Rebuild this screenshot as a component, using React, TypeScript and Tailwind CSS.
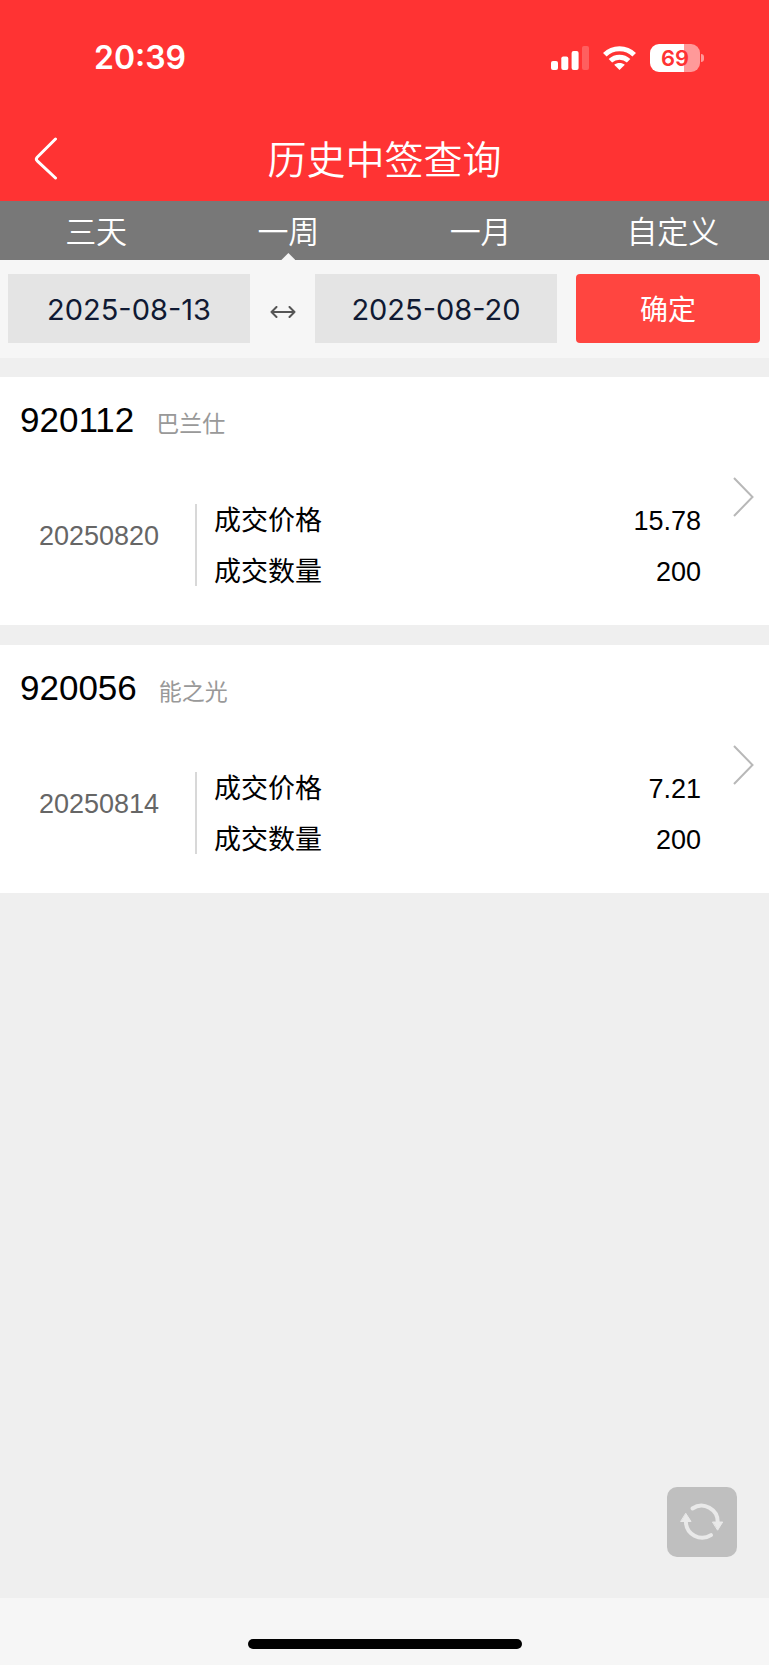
import { useState } from 'react';

interface Allotment {
  code: string;
  name: string;
  date: string;
  price: string;
  quantity: string;
}

const RANGES = ['三天', '一周', '一月', '自定义'];

const ALLOTMENTS: Allotment[] = [
  { code: '920112', name: '巴兰仕', date: '20250820', price: '15.78', quantity: '200' },
  { code: '920056', name: '能之光', date: '20250814', price: '7.21', quantity: '200' },
];

function StatusBar() {
  return (
    <div className="flex h-[116px] items-center justify-between pl-[94px] pr-[65px]">
      <span className="font-['Inter',sans-serif] text-[32px] font-semibold leading-10">20:39</span>
      <div className="flex items-center gap-[14px]">
        <svg width="38" height="24" viewBox="0 0 38 24" fill="currentColor" aria-hidden="true">
          <rect x="0" y="15" width="7" height="9" rx="2" />
          <rect x="10.3" y="10.5" width="7" height="13.5" rx="2" />
          <rect x="20.6" y="5" width="7" height="19" rx="2" />
          <rect x="31" y="0" width="7" height="24" rx="2" opacity="0.22" />
        </svg>
        <svg width="33" height="24" viewBox="0 0 33 24" aria-hidden="true">
          <g fill="none" stroke="currentColor" strokeWidth="5">
            <path d="M1.8 8.8C9.8 0.7 23.2 0.7 31.2 8.8" />
            <path d="M7.4 14.8C12.4 10 20.6 10 25.6 14.8" />
          </g>
          <path d="M16.5 24L11.2 18.8C14.2 16.3 18.8 16.3 21.8 18.8Z" fill="currentColor" />
        </svg>
        <div className="flex items-center gap-px">
          <div className="flex h-7 w-[50px] items-center justify-center rounded-[9px] bg-[linear-gradient(90deg,#fff_68%,#ff9999_68%)]">
            <span className="font-['Inter',sans-serif] text-[22px] font-semibold leading-7 text-[#ff3333]">69</span>
          </div>
          <div className="h-2 w-[3px] rounded-r-full bg-[#ff9999]" />
        </div>
      </div>
    </div>
  );
}

function AllotmentCard({ item }: { item: Allotment }) {
  return (
    <a href={`#${item.code}`} className="flex items-center bg-white pb-2 pl-5 pr-[15px]">
      <div className="flex-1 pb-[31px] pt-[23px]">
        <div className="flex items-baseline gap-[22px]">
          <h2 className="text-[35px] leading-10 text-black">{item.code}</h2>
          <p className="text-[23px] leading-8 text-[#999999]">{item.name}</p>
        </div>
        <div className="mt-16 flex items-center text-[27px] leading-7 text-black">
          <time className="w-[175px] pb-[18px] pl-[19px] text-[#666666]">{item.date}</time>
          <dl className="flex flex-1 flex-col gap-[23px] border-l-2 border-[#d8d8d8] pl-[17px] pr-[32px] pt-[3px]">
            <div className="flex justify-between">
              <dt>成交价格</dt>
              <dd>{item.price}</dd>
            </div>
            <div className="flex justify-between">
              <dt>成交数量</dt>
              <dd>{item.quantity}</dd>
            </div>
          </dl>
        </div>
      </div>
      <svg width="21" height="40" viewBox="0 0 21 40" fill="none" stroke="#b8b8b8" strokeWidth="2" aria-hidden="true">
        <path d="M1 1L19.5 20L1 39" />
      </svg>
    </a>
  );
}

export default function App() {
  const [range, setRange] = useState('一周');
  const [startDate, setStartDate] = useState('2025-08-13');
  const [endDate, setEndDate] = useState('2025-08-20');

  return (
    <div className="flex min-h-screen flex-col bg-[#efefef] font-['Liberation_Sans','Noto_Sans_CJK_SC',sans-serif]">
      <header className="bg-[#ff3333] text-white">
        <StatusBar />
        <div className="grid h-[85px] grid-cols-[1fr_auto_1fr] items-center px-[34px]">
          <button type="button" aria-label="返回" className="w-6">
            <svg width="24" height="44" viewBox="0 0 24 44" fill="none" stroke="currentColor" strokeWidth="3" strokeLinecap="round" strokeLinejoin="round">
              <path d="M21.5 2L3.2 20.2Q1.5 22 3.2 23.8L21.5 41" />
            </svg>
          </button>
          <h1 className="pt-1 text-[39px] font-[350] leading-[48px]">历史中签查询</h1>
        </div>
      </header>

      <nav className="grid grid-cols-4 bg-[#787878] text-white">
        {RANGES.map((label) => (
          <button
            key={label}
            type="button"
            onClick={() => setRange(label)}
            className="relative h-[59px] pt-1 text-[31px] font-[350] leading-10"
          >
            {label}
            {range === label && (
              <span className="absolute bottom-0 left-1/2 h-[7px] w-[14px] -translate-x-1/2 bg-[#f6f6f6] [clip-path:polygon(50%_0,100%_100%,0_100%)]" />
            )}
          </button>
        ))}
      </nav>

      <form className="flex items-center bg-[#f6f6f6] pb-[15px] pl-2 pr-[9px] pt-[14px]" onSubmit={(e) => e.preventDefault()}>
        <input
          type="text"
          aria-label="开始日期"
          value={startDate}
          onChange={(e) => setStartDate(e.target.value)}
          className="h-[69px] min-w-0 flex-1 bg-[#e4e4e4] pt-0.5 text-center font-['Inter',sans-serif] text-[29px] text-[#101a33]"
        />
        <div className="flex w-[65px] justify-center pt-1.5">
          <svg width="26" height="12" viewBox="0 0 26 12" fill="none" stroke="#555555" strokeWidth="2" strokeLinecap="round" strokeLinejoin="round" aria-hidden="true">
            <path d="M1.5 6H24.5M6.5 1L1.5 6L6.5 11M19.5 1L24.5 6L19.5 11" />
          </svg>
        </div>
        <input
          type="text"
          aria-label="结束日期"
          value={endDate}
          onChange={(e) => setEndDate(e.target.value)}
          className="h-[69px] min-w-0 flex-1 bg-[#e4e4e4] pt-0.5 text-center font-['Inter',sans-serif] text-[29px] text-[#101a33]"
        />
        <button type="submit" className="ml-[19px] h-[69px] w-[184px] rounded bg-[#ff4540] pt-1 text-[28px] text-white">
          确定
        </button>
      </form>

      <main className="flex flex-1 flex-col gap-5 pt-[19px]">
        {ALLOTMENTS.map((item) => (
          <AllotmentCard key={item.code} item={item} />
        ))}
        <button
          type="button"
          aria-label="刷新"
          className="mb-[41px] ml-auto mr-8 mt-auto size-[70px] rounded-[10px] bg-[#bfbfbf] text-[#e9e9e9]"
        >
          <svg viewBox="0 0 71 71" fill="none" stroke="currentColor" strokeWidth="4" strokeLinecap="round">
            <path d="M25.8 21.8A16.5 16.5 0 0 1 51.5 36" />
            <path d="M44.6 48.8A16.5 16.5 0 0 1 19.2 35" />
            <path d="M46.5 35.5H56.5L51.5 43.5ZM14.2 35H24.4L19.2 27Z" fill="currentColor" strokeWidth="1" strokeLinejoin="round" />
          </svg>
        </button>
      </main>

      <footer className="flex h-[67px] items-end justify-center bg-[#f6f6f6] pb-4">
        <div className="h-[10px] w-[274px] rounded-full bg-black" />
      </footer>
    </div>
  );
}
